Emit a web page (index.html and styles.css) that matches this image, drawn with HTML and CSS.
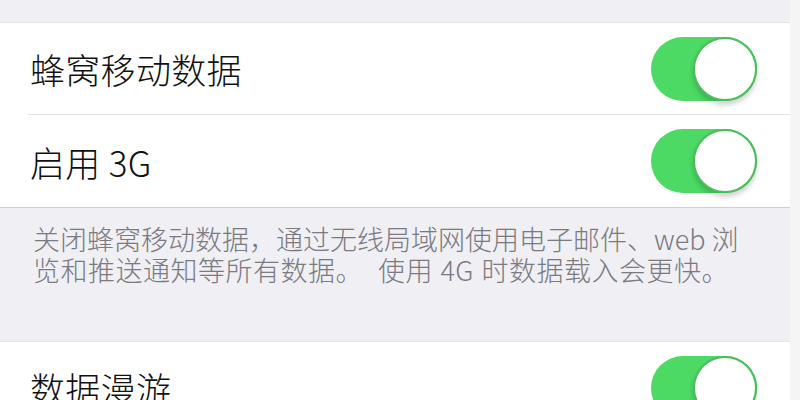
FILE: index.html
```html
<!DOCTYPE html>
<html lang="zh-CN">
<head>
<meta charset="utf-8">
<title>蜂窝移动网络</title>
<link rel="stylesheet" href="styles.css">
</head>
<body>
<div class="screen">
  <div class="spacer"></div>
  <div class="group">
    <div class="cell">
      <span class="label">蜂窝移动数据</span>
      <span class="switch on"><span class="knob"></span></span>
    </div>
    <div class="cell">
      <span class="label">启用 3G</span>
      <span class="switch on"><span class="knob"></span></span>
    </div>
  </div>
  <div class="footer">关闭蜂窝移动数据，通过无线局域网使用电子邮件、web 浏<br><span class="wide">览和推送通知等所有数据。&nbsp; 使用 4G 时数据载入会更快。</span></div>
  <div class="group">
    <div class="cell">
      <span class="label">数据漫游</span>
      <span class="switch on"><span class="knob"></span></span>
    </div>
  </div>
</div>
<div class="edge"></div>
</body>
</html>
```
FILE: styles.css
```css
html, body {
  margin: 0;
  padding: 0;
}
body {
  width: 800px;
  height: 400px;
  overflow: hidden;
  display: flex;
  background: #f5f5f7;
  font-family: "Noto Sans CJK SC", "Noto Sans", sans-serif;
}
.screen {
  width: 790px;
  flex: none;
  background: #efeff4;
}
.edge {
  flex: 1;
  background: #f5f5f6;
}
.spacer {
  height: 22px;
}
.group {
  background: #ffffff;
  border-top: 1px solid #e4e4e8;
  border-bottom: 1px solid #cfcfd3;
}
.cell {
  height: 91px;
  margin-left: 28px;
  padding-left: 2px;
  padding-right: 33px;
  display: flex;
  align-items: center;
  justify-content: space-between;
}
.cell + .cell {
  border-top: 1px solid #e2e2e4;
  height: 92px;
}
.label {
  font-size: 35px;
  font-weight: 300;
  color: #111111;
  line-height: 1;
  letter-spacing: 0.3px;
}
.switch {
  width: 106px;
  height: 64px;
  border-radius: 32px;
  background: #4cd964;
  display: flex;
  justify-content: flex-end;
  box-sizing: border-box;
}
.knob {
  width: 64px;
  height: 64px;
  border-radius: 50%;
  box-sizing: border-box;
  background: #ffffff;
  border: 2px solid #47bf5a;
  box-shadow: 0 4px 5px rgba(0, 0, 0, 0.18);
}
.footer {
  height: 133px;
  box-sizing: border-box;
  padding: 15px 20px 0 33px;
  font-size: 27px;
  font-weight: 300;
  line-height: 31px;
  color: #7a7a80;
  white-space: nowrap;
}
.wide {
  letter-spacing: 0.5px;
  word-spacing: 1px;
}
```
